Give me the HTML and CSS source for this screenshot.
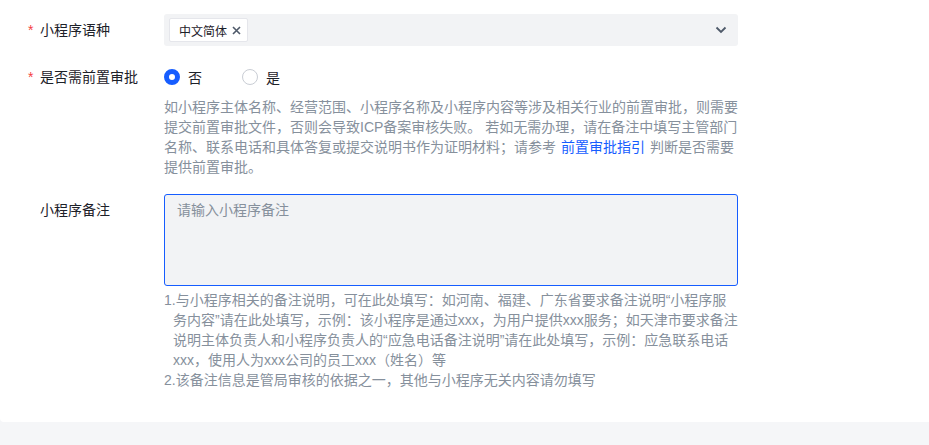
FILE: index.html
```html
<!DOCTYPE html>
<html lang="zh-CN">
<head>
  <meta charset="UTF-8" />
  <meta name="viewport" content="width=device-width, initial-scale=1.0" />
  <title>小程序备案信息</title>
  <link rel="stylesheet" href="styles.css">
</head>
<body>
  <div class="card">
    <div class="form-item">
      <label class="form-label"><span class="req">*</span>小程序语种</label>
      <div class="form-control">
        <div class="select">
          <span class="tag">中文简体
            <svg class="tag-close" width="9" height="9" viewBox="0 0 9 9"><path d="M1 1L8 8M8 1L1 8" /></svg>
          </span>
          <svg class="arrow" width="12" height="8" viewBox="0 0 12 8"><path d="M1.5 1.5L6 6L10.5 1.5" /></svg>
        </div>
      </div>
    </div>

    <div class="form-item">
      <label class="form-label"><span class="req">*</span>是否需前置审批</label>
      <div class="form-control">
        <div class="radio-group">
          <label class="radio"><span class="radio-dot checked"></span>否</label>
          <label class="radio"><span class="radio-dot"></span>是</label>
        </div>
        <p class="help">如小程序主体名称、经营范围、小程序名称及小程序内容等涉及相关行业的前置审批，则需要提交前置审批文件，否则会导致ICP备案审核失败。 若如无需办理，请在备注中填写主管部门名称、联系电话和具体答复或提交说明书作为证明材料；请参考<a class="link" href="#">前置审批指引</a>判断是否需要提供前置审批。</p>
      </div>
    </div>

    <div class="form-item">
      <label class="form-label no-req">小程序备注</label>
      <div class="form-control">
        <textarea class="textarea" placeholder="请输入小程序备注" autofocus></textarea>
        <ol class="notes">
          <li>1.与小程序相关的备注说明，可在此处填写：如河南、福建、广东省要求备注说明“小程序服务内容”请在此处填写，示例：该小程序是通过xxx，为用户提供xxx服务；如天津市要求备注说明主体负责人和小程序负责人的“应急电话备注说明”请在此处填写，示例：应急联系电话xxx，使用人为xxx公司的员工xxx（姓名）等</li>
          <li>2.该备注信息是管局审核的依据之一，其他与小程序无关内容请勿填写</li>
        </ol>
      </div>
    </div>
  </div>
</body>
</html>
```

FILE: styles.css
```css
body {
  margin: 0;
  background: #f5f6f8;
  font-family: "Liberation Sans", "Noto Sans CJK SC", sans-serif;
  font-size: 14px;
  color: #1d2129;
}

.card {
  background: #fff;
  height: 422px;
  box-sizing: border-box;
  padding-top: 14px;
  border-bottom-left-radius: 4px;
}

.form-item {
  display: flex;
  margin-bottom: 15px;
}

.form-item:nth-child(2) {
  margin-bottom: 17px;
}

.form-label {
  width: 164px;
  flex-shrink: 0;
  box-sizing: border-box;
  padding-left: 28px;
  line-height: 32px;
}

.form-label.no-req {
  padding-left: 40px;
}

.req {
  display: inline-block;
  width: 12px;
  color: #f53f3f;
}

.form-control {
  width: 574px;
}

.select {
  height: 32px;
  background: #f2f3f5;
  border-radius: 3px;
  display: flex;
  align-items: center;
  justify-content: space-between;
  padding: 0 11px 0 5px;
}

.tag {
  display: inline-flex;
  align-items: center;
  gap: 5px;
  height: 24px;
  box-sizing: border-box;
  padding: 0 6px 0 9px;
  background: #fff;
  border: 1px solid #e5e6eb;
  border-radius: 2px;
  font-size: 12px;
  color: #1d2129;
}

.tag-close path {
  stroke: #4e5969;
  stroke-width: 1.6;
  fill: none;
}

.arrow path {
  stroke: #4e5969;
  stroke-width: 1.8;
  fill: none;
}

.radio-group {
  display: flex;
  align-items: center;
  height: 32px;
  gap: 40px;
}

.radio {
  display: flex;
  align-items: center;
  gap: 8px;
}

.radio-dot {
  width: 16px;
  height: 16px;
  box-sizing: border-box;
  border-radius: 50%;
  border: 1px solid #c9cdd4;
  background: #fff;
}

.radio-dot.checked {
  border: 5px solid #165dff;
}

.help {
  margin: 4px 0 0;
  width: 576px;
  line-height: 20px;
  color: #86909c;
}

.link {
  color: #165dff;
  text-decoration: none;
  margin: 0 5px;
}

.textarea {
  display: block;
  width: 100%;
  height: 92px;
  box-sizing: border-box;
  margin: 0;
  padding: 4px 12px;
  border: 1px solid #165dff;
  border-radius: 3px;
  background: #f2f3f5;
  font-family: inherit;
  font-size: 14px;
  line-height: 22px;
  color: #1d2129;
  resize: none;
  outline: none;
}

.textarea::placeholder {
  color: #86909c;
}

.notes {
  list-style: none;
  margin: 4px 0 0;
  padding: 0;
  width: 575px;
  line-height: 20px;
  color: #86909c;
}

.notes li {
  padding-left: 9px;
  text-indent: -9px;
}
```
